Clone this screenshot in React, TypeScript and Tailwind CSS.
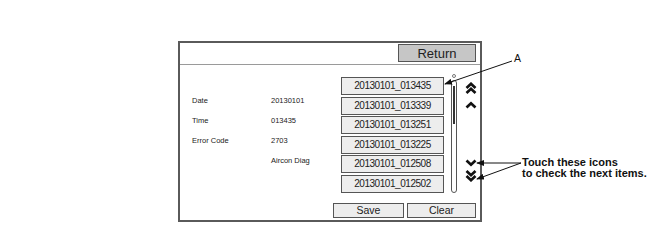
import React from "react";

const items = [
  "20130101_013435",
  "20130101_013339",
  "20130101_013251",
  "20130101_013225",
  "20130101_012508",
  "20130101_012502",
];

const Chev = ({ double, down }: { double?: boolean; down?: boolean }) => (
  <svg width="14" height={double ? 12 : 10} viewBox={double ? "0 0 14 12" : "0 0 14 10"} className="block">
    <g transform={down ? (double ? "translate(0 12) scale(1 -1)" : "translate(0 10) scale(1 -1)") : undefined} fill="none" stroke="#111" strokeWidth="2.7" strokeLinecap="butt" strokeLinejoin="miter">
      {double ? (
        <>
          <path d="M2.5 6 L7 1.8 L11.5 6" />
          <path d="M2.5 11 L7 6.8 L11.5 11" />
        </>
      ) : (
        <path d="M2.5 7.5 L7 3.3 L11.5 7.5" />
      )}
    </g>
  </svg>
);

export default function App() {
  return (
    <div className="relative w-[658px] h-[246px] bg-white overflow-hidden" style={{ fontFamily: '"Liberation Sans", Arial, sans-serif' }}>
      <div className="ml-[178px] pt-[41px]">
        <div className="w-[304px] h-[181px] border-2 border-[#5a5a5a] flex flex-col">
          {/* header */}
          <div className="h-[20px] border-b border-[#9a9a9a] flex justify-end items-start pt-[1px] pr-[4px] box-content">
            <div className="w-[78px] h-[18px] bg-[#c6c6c6] border border-[#555] flex items-center justify-center text-[13px] leading-none text-[#222]">
              Return
            </div>
          </div>
          {/* body */}
          <div className="flex-1 flex">
            <div className="w-[161px] pt-[26px] pl-[12px] text-[7.5px] text-[#222]">
              <div className="grid grid-cols-[79px_1fr] auto-rows-[20px] items-center">
                <span>Date</span>
                <span>20130101</span>
                <span>Time</span>
                <span>013435</span>
                <span>Error Code</span>
                <span>2703</span>
                <span></span>
                <span>Aircon Diag</span>
              </div>
            </div>
            <div className="w-[103px] pt-[12px] flex flex-col gap-[1.5px]">
              {items.map((t) => (
                <div
                  key={t}
                  className="h-[18px] bg-[#ededed] border border-[#555] flex items-center justify-center text-[10px] tracking-[-0.45px] text-[#222] leading-none"
                >
                  {t}
                </div>
              ))}
            </div>
            <div className="w-[6px] ml-[7px] pt-[9px] flex flex-col items-center">
              <div className="w-[4px] h-[4px] rounded-full border border-[#777]" />
              <div className="relative mt-[2px] w-[6px] h-[113px] rounded-full border border-[#555] bg-white">
                <div className="absolute left-[1px] top-[5px] w-[1.5px] h-[38px] bg-[#333]" />
              </div>
            </div>
            <div className="flex-1 pl-[7px] pt-[17px] flex flex-col">
              <Chev double />
              <div className="mt-[6px]">
                <Chev />
              </div>
              <div className="mt-[48px]">
                <Chev down />
              </div>
              <div className="mt-[2px]">
                <Chev double down />
              </div>
            </div>
          </div>
          {/* footer */}
          <div className="h-[17px] flex justify-end gap-[3px] pr-[4px]">
            <div className="w-[71px] h-[15px] bg-[#ededed] border border-[#555] flex items-center justify-center text-[10.5px] leading-none text-[#222]">
              Save
            </div>
            <div className="w-[69px] h-[15px] bg-[#ededed] border border-[#555] flex items-center justify-center text-[10.5px] leading-none text-[#222]">
              Clear
            </div>
          </div>
        </div>
      </div>

      {/* annotations */}
      <div className="absolute left-[514px] top-[53px] text-[10.5px] leading-none text-[#111]">A</div>
      <div className="absolute left-[522px] top-[157px] text-[11px] leading-[11px] font-bold text-[#111]">
        <div>Touch these icons</div>
        <div>to check the next items.</div>
      </div>
      <svg className="absolute inset-0 pointer-events-none" width="658" height="246">
        <defs>
          <marker id="ah" markerWidth="8" markerHeight="6" refX="7" refY="3" orient="auto" markerUnits="userSpaceOnUse">
            <path d="M0 0 L8 3 L0 6 Z" fill="#111" />
          </marker>
        </defs>
        <line x1="512" y1="61" x2="445" y2="84" stroke="#111" strokeWidth="1" markerEnd="url(#ah)" />
        <line x1="521" y1="163" x2="477" y2="163" stroke="#111" strokeWidth="1" markerEnd="url(#ah)" />
        <line x1="521" y1="163" x2="477" y2="179" stroke="#111" strokeWidth="1" markerEnd="url(#ah)" />
      </svg>
    </div>
  );
}
